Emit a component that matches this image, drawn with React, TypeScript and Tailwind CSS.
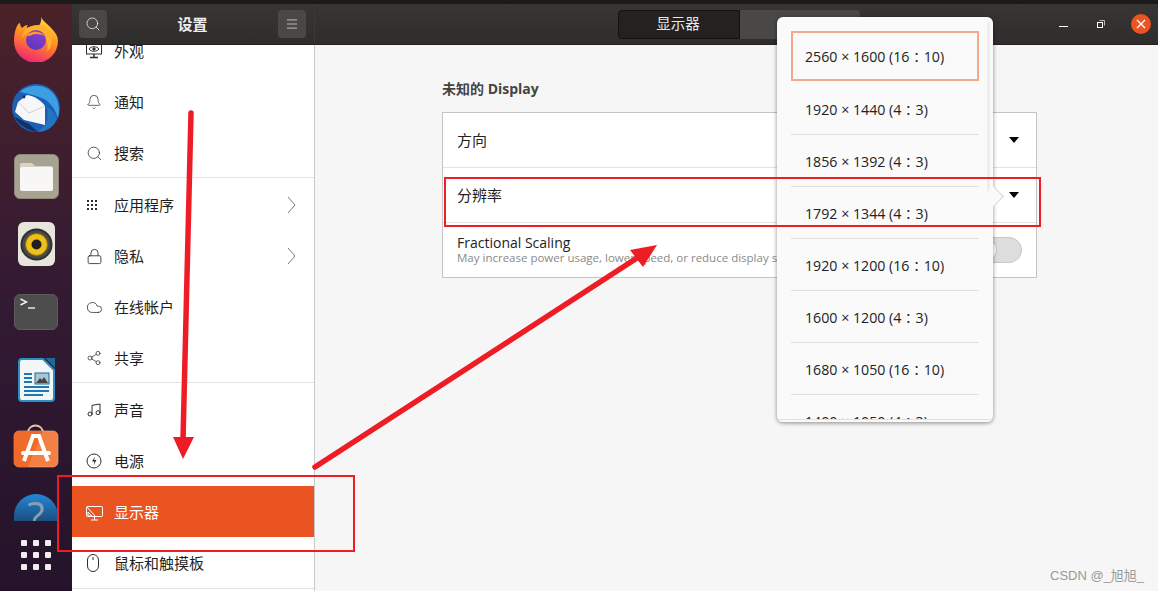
import { Bell, Cloud, Lock, Menu, Music, Search, Share2 } from "lucide-react";
import type { ReactNode } from "react";

const cjk = "font-['Open_Sans','Noto_Sans_CJK_SC',sans-serif]";

const FirefoxIcon = () => (
  <svg width="46" height="46" viewBox="0 0 46 46">
    <defs>
      <linearGradient id="ff" x1="0.7" y1="0" x2="0.35" y2="1">
        <stop offset="0" stopColor="#ffe23a" />
        <stop offset="0.5" stopColor="#ff8a22" />
        <stop offset="1" stopColor="#f0207a" />
      </linearGradient>
      <linearGradient id="ffp" x1="0.8" y1="0" x2="0.2" y2="1">
        <stop offset="0" stopColor="#8f3fd8" />
        <stop offset="1" stopColor="#5a36b8" />
      </linearGradient>
    </defs>
    <path d="M28 0c1 5 7 8 11 13 4 4 6 8 6 12a22 22 0 0 1-44 0c0-6 1-11 3-15 1-2 2-3 3-3 0 2 1 4 2 5 2-2 4-3 6-3-1 1-1 2-1 3 3-2 8-2 11-1 3-4 4-8 3-11z" fill="url(#ff)" />
    <path d="M9 22c1-8 8-13 15-13 8 0 14 6 15 14 0 6-2 10-5 13 2-9-1-18-10-20-7-1-12 2-15 6z" fill="#ffb02e" />
    <circle cx="23" cy="24" r="10" fill="url(#ffp)" />
    <path d="M13 20c3-3 7-5 11-4 3 0 6 2 8 4-4-2-10-3-13-1-2 1-4 1-6 1z" fill="#ff9a1f" />
  </svg>
);

const ThunderbirdIcon = () => (
  <svg width="48" height="48" viewBox="0 0 48 48">
    <circle cx="24" cy="24" r="24" fill="#1d5fb3" />
    <path d="M8 8C16 0 32-1 41 9c6 7 7 17 5 25-3-9-7-15-14-19-6-3-14-5-24-7z" fill="#3b9fe2" />
    <path d="M1 30c3 9 14 17 25 18l-9-8-14-7z" fill="#12306a" />
    <path d="M34 22c3 7 2 14-1 19l-7 7c9 0 16-6 19-13-2-6-6-10-11-13z" fill="#2474c4" />
    <path d="M6 18l9-7c7 1 14 5 18 11v19l-21-5-9-8z" fill="#f7f7f9" />
    <path d="M6 18l11 11 16-7" fill="none" stroke="#c4c7d0" strokeWidth="0.800" />
    <circle cx="12" cy="13" r="1.400" fill="#12305f" />
  </svg>
);

const FilesIcon = () => (
  <div className="w-[45px] h-[45px] rounded-md bg-[#a8a290] border border-[#8d8878] flex items-center justify-center">
    <svg width="33" height="29" viewBox="0 0 33 29">
      <path d="M0 3a2 2 0 0 1 2-2h10l3 3h16a2 2 0 0 1 2 2v2H0z" fill="#d6d3c9" />
      <rect x="0" y="5" width="33" height="24" rx="2" fill="#f8f7f5" />
    </svg>
  </div>
);

const RhythmboxIcon = () => (
  <div className="w-[37px] h-[44px] rounded-md bg-[#e8e5dc] flex items-center justify-center">
    <svg width="33" height="33" viewBox="0 0 33 33">
      <circle cx="16.500" cy="16.500" r="16" fill="#2e2e2e" />
      <circle cx="16.500" cy="16.500" r="14" fill="#4a4a48" />
      <circle cx="16.500" cy="16.500" r="11" fill="#f0c018" stroke="#8a701c" strokeWidth="1" />
      <circle cx="16.500" cy="16.500" r="5" fill="#1f1f1f" />
    </svg>
  </div>
);

const TerminalIcon = () => (
  <div className="w-[44px] h-[36px] rounded-md bg-[#4d4d4d] border border-[#5c5c5c] relative">
    <svg width="44" height="36" viewBox="0 0 44 36" className="absolute -left-px -top-px">
      <path d="M6.500 5l6 3-6 3" fill="none" stroke="#f2f2f2" strokeWidth="1.400" />
      <path d="M14 14h7" stroke="#f2f2f2" strokeWidth="1.400" />
    </svg>
  </div>
);

const WriterIcon = () => (
  <svg width="37" height="44" viewBox="0 0 37 44">
    <path d="M4 1h21l11 11v28a3 3 0 0 1-3 3H4a3 3 0 0 1-3-3V4a3 3 0 0 1 3-3z" fill="#f3f5f7" stroke="#2c8fc4" strokeWidth="2" />
    <path d="M27 0h10v10z" fill="#1b6a98" />
    <path d="M6 16h8M6 20h8M6 24h8M6 29h25M6 33h25M6 37h19" stroke="#1b78b0" strokeWidth="2" />
    <rect x="17" y="15" width="14" height="11" fill="#a9c6d8" stroke="#1b6a98" />
    <path d="M18 25l4-5 2 2 2-3 4 6z" fill="#444" />
  </svg>
);

const SoftwareIcon = () => (
  <svg width="46" height="44" viewBox="0 0 46 44">
    <path d="M15 9c0-10 15-10 15 0" fill="none" stroke="#e9c9a0" strokeWidth="1.800" />
    <rect x="1" y="7" width="44" height="36" rx="5" fill="#f58043" stroke="#f8a878" strokeWidth="0.600" />
    <path d="M1 12a5 5 0 0 1 5-5h24L15 43H6a5 5 0 0 1-5-5z" fill="#f06a2a" />
    <path d="M11 37l9-25h6l9 25" fill="none" stroke="#fff" strokeWidth="4" />
    <rect x="8" y="27" width="30" height="4" rx="2" fill="#fff" />
  </svg>
);

const HelpIcon = () => (
  <div className="w-[44px] h-[27px] rounded-t-full bg-gradient-to-b from-[#2488d8] to-[#1b4f80] flex justify-center overflow-hidden">
    <span className={`${cjk} text-[40px] leading-[44px] h-[27px] text-[#8b9eb0]`}>?</span>
  </div>
);

const DisplayIcon = ({ light }: { light?: boolean }) => (
  <svg width="17" height="16" viewBox="0 0 17 16" fill="none" stroke={light ? "#ffffff" : "#2e2e2e"} strokeWidth="1">
    <rect x="0.500" y="1.500" width="16" height="10" rx="1" />
    <path d="M1 2l8 9M2 7l4 4H2zM5 15h7M8.500 12v3" />
  </svg>
);

const AppearanceIcon = () => (
  <svg width="16" height="16" viewBox="0 0 16 16" fill="none" stroke="#2e2e2e" strokeWidth="1">
    <rect x="0.500" y="0.500" width="15" height="10.500" />
    <path d="M3 6c2-3 8-3 10 0-2 3-8 3-10 0z" />
    <circle cx="8" cy="6" r="1.200" fill="#2e2e2e" />
    <path d="M4 14.500h8M8 11v3" strokeWidth="1.500" />
  </svg>
);

const AppsIcon = () => (
  <div className="grid grid-cols-3 gap-[2px] w-[10px] ml-[1px]">
    {Array.from({ length: 9 }).map((_, i) => (
      <span key={i} className="w-[2px] h-[2px] bg-[#2e2e2e]" />
    ))}
  </div>
);

const PowerIcon = () => (
  <svg width="16" height="16" viewBox="0 0 16 16" fill="none" stroke="#2e2e2e">
    <circle cx="8" cy="8" r="7" />
    <path d="M9 3.500L6 8.500h2.500L7.500 12.500l3-5.500H8z" fill="#2e2e2e" stroke="none" />
  </svg>
);

const MouseIcon = () => (
  <svg width="14" height="18" viewBox="0 0 14 18" fill="none" stroke="#2e2e2e">
    <rect x="1.500" y="0.500" width="11" height="17" rx="5.500" />
    <path d="M7 3v3" />
  </svg>
);

const Chevron = () => (
  <svg width="9" height="18" viewBox="0 0 9 18" fill="none" stroke="#666" strokeWidth="0.900">
    <path d="M1 1l7 8-7 8" />
  </svg>
);

const navIcon = "text-[#2e2e2e]";

const Row = ({ icon, label, chevron, divider, active }: { icon: ReactNode; label: string; chevron?: boolean; divider?: boolean; active?: boolean }) => (
  <div className={`h-[51.300px] shrink-0 flex items-center pt-[2px] pl-[14px] pr-[18px] ${active ? "bg-[#e95420] text-white" : "text-[#1f1f1f]"} ${divider ? "border-b border-[#e2e2e2]" : ""}`}>
    <span className="w-[28px] flex items-center justify-start">{icon}</span>
    <span className={`${cjk} text-[15px] flex-1`}>{label}</span>
    {chevron && <Chevron />}
  </div>
);

const modes = [
  "2560 × 1600 (16∶10)",
  "1920 × 1440 (4∶3)",
  "1856 × 1392 (4∶3)",
  "1792 × 1344 (4∶3)",
  "1920 × 1200 (16∶10)",
  "1600 × 1200 (4∶3)",
  "1680 × 1050 (16∶10)",
  "1400 × 1050 (4∶3)",
];

const Arrow = ({ d, tip }: { d: string; tip: string }) => (
  <svg width="1158" height="591" viewBox="0 0 1158 591" className="absolute inset-0 pointer-events-none">
    <path d={d} fill="none" stroke="#ee1c25" strokeWidth="5.500" strokeLinecap="round" />
    <path d={tip} fill="#ee1c25" />
  </svg>
);

export default function App() {
  return (
    <div className={`${cjk} relative w-[1158px] h-[591px] overflow-hidden flex flex-col bg-[#f6f6f6]`}>
      <div className="h-[4px] shrink-0 bg-[#1b1b1b]" />
      <div className="flex-1 flex min-h-0">
        <aside className="w-[72px] shrink-0 bg-gradient-to-b from-[#4a2128] via-[#331a33] to-[#24132a] pt-[12px] flex flex-col items-center">
          <div className="h-[46px] flex items-center"><FirefoxIcon /></div>
          <div className="mt-[22px] h-[48px] flex items-center"><ThunderbirdIcon /></div>
          <div className="mt-[22px] h-[45px] flex items-center"><FilesIcon /></div>
          <div className="mt-[23px] h-[44px] flex items-center"><RhythmboxIcon /></div>
          <div className="mt-[28px] h-[36px] flex items-center"><TerminalIcon /></div>
          <div className="mt-[28px] h-[44px] flex items-center"><WriterIcon /></div>
          <div className="mt-[22px] h-[44px] flex items-center"><SoftwareIcon /></div>
          <div className="mt-[26px] h-[27px] flex items-center"><HelpIcon /></div>
          <div className="mt-[19px] grid grid-cols-3 gap-x-[6px] gap-y-[6px]">
            {Array.from({ length: 9 }).map((_, i) => (
              <span key={i} className="w-[6px] h-[6px] rounded-[1px] bg-[#eeeeee]" />
            ))}
          </div>
        </aside>

        <div className="flex-1 flex flex-col min-w-0">
          <header className="h-[41px] shrink-0 bg-gradient-to-b from-[#383533] to-[#2f2d2c] border-b border-[#232221] flex text-white">
            <div className="w-[243px] shrink-0 flex items-center justify-between pl-[7px] pr-[8px] border-r border-[#3b3937]">
              <button className="w-[28px] h-[28px] rounded bg-[#4a4846] flex items-center justify-center text-[#eee]"><Search size={16} strokeWidth={1.200} /></button>
              <span className="text-[15px] font-bold text-[#eeeeee]">设置</span>
              <button className="w-[28px] h-[28px] rounded bg-[#4a4846] flex items-center justify-center text-[#eee]"><Menu size={14} strokeWidth={1.200} /></button>
            </div>
            <div className="flex-1 relative flex items-center">
              <div className="ml-[303px] flex h-[29px] text-[14.500px]">
                <div className="w-[122px] flex items-center justify-center pr-[2px] bg-[#232221] border border-[#111] rounded-l text-[#e8e8e8]">显示器</div>
                <div className="w-[120px] bg-[#4a4846] rounded-r" />
              </div>
              <div className="ml-auto flex items-center pr-[7px]">
                <span className="w-[9px] h-px bg-white mr-[29px] relative top-[2px]" />
                <svg width="8" height="8" viewBox="0 0 8 8" fill="none" stroke="#fff" className="mr-[26px]">
                  <rect x="0.500" y="2.500" width="5" height="5" />
                  <path d="M2.500 0.500h5v5" stroke="#bbb" />
                </svg>
                <span className="w-[20px] h-[20px] rounded-full bg-[#e95420] flex items-center justify-center">
                  <svg width="10" height="10" viewBox="0 0 10 10"><path d="M1 1l8 8M9 1l-8 8" stroke="#fff" strokeWidth="1.300" /></svg>
                </span>
              </div>
            </div>
          </header>

          <div className="flex-1 flex min-h-0">
            <nav className="w-[243px] shrink-0 bg-white border-r border-[#c9c9c9] overflow-hidden">
              <div className="flex flex-col -mt-[20.700px]">
                <Row icon={<AppearanceIcon />} label="外观" />
                <Row icon={<Bell size={16} strokeWidth={1.100} className={navIcon} />} label="通知" />
                <Row icon={<Search size={17} strokeWidth={1.100} className={navIcon} />} label="搜索" divider />
                <Row icon={<AppsIcon />} label="应用程序" chevron />
                <Row icon={<Lock size={17} strokeWidth={1.200} className={navIcon} />} label="隐私" chevron />
                <Row icon={<Cloud size={17} strokeWidth={1.100} className={navIcon} />} label="在线帐户" />
                <Row icon={<Share2 size={16} strokeWidth={1.100} className={navIcon} />} label="共享" divider />
                <Row icon={<Music size={16} strokeWidth={1.500} className={navIcon} />} label="声音" />
                <Row icon={<PowerIcon />} label="电源" />
                <Row icon={<DisplayIcon light />} label="显示器" active />
                <Row icon={<MouseIcon />} label="鼠标和触摸板" divider />
              </div>
            </nav>

            <main className="flex-1 pl-[127px] pt-[35px]">
              <h2 className="text-[14px] font-bold text-[#444] leading-[18px]">未知的 Display</h2>
              <div className="w-[595px] mt-[14px] bg-white border border-[#c4c4c4]">
                <div className="h-[55px] flex items-center justify-between pl-[14px] pr-[17px] border-b border-[#e2e2e2] text-[15px] text-[#222]">
                  方向
                  <span className="w-0 h-0 border-x-[5px] border-x-transparent border-t-[6px] border-t-black" />
                </div>
                <div className="h-[55px] flex items-start justify-between pl-[14px] pr-[17px] pt-[17px] border-b border-[#e2e2e2] text-[15px] text-[#222]">
                  <span className="leading-[22px] -mt-[1px]">分辨率</span>
                  <span className="w-0 h-0 mt-[7px] border-x-[5px] border-x-transparent border-t-[6px] border-t-black" />
                </div>
                <div className="h-[54px] flex items-center justify-between pl-[14px] pr-[14px]">
                  <div className="pb-[2px]">
                    <p className="text-[14px] leading-[16px] text-[#222]">Fractional Scaling</p>
                    <p className="text-[11.500px] leading-[13px] text-[#8a8a8a] whitespace-nowrap">May increase power usage, lower speed, or reduce display sharpness.</p>
                  </div>
                  <span className="w-[50px] h-[26px] rounded-full bg-[#dddddd] border border-[#c6c6c6] flex">
                    <span className="w-[24px] h-[24px] rounded-full bg-white border border-[#c6c6c6]" />
                  </span>
                </div>
              </div>
            </main>
          </div>
        </div>
      </div>

      {/* resolution popover */}
      <div className="absolute left-[777px] top-[17px] w-[216px] h-[405px] bg-[#fafafa] rounded-md shadow-[0_1px_4px_rgba(0,0,0,0.45)] px-[14px] pt-[14px] overflow-hidden">
        <div className="absolute right-[3px] top-[5px] w-[3px] h-[177px] rounded bg-[#eeeeee]" />
        {modes.map((mode, i) =>
          i === 0 ? (
            <div key={mode} className="h-[50px] mb-[2px] flex items-center pt-[1px] pl-[12px] border-2 border-[#f4a88c] text-[14.200px] text-[#222] whitespace-nowrap">
              {mode}
            </div>
          ) : (
            <div key={mode} className="h-[52px] flex items-center pt-[2px] pl-[14px] border-b border-[#e0e0e0] text-[14.200px] text-[#222] whitespace-nowrap">
              {mode}
            </div>
          )
        )}
        <div className="absolute inset-x-0 bottom-0 h-[3px] bg-[#fafafa] border-t border-[#e0e0e0]" />
      </div>
      <span className="absolute left-[985.500px] top-[188.500px] w-[15px] h-[15px] bg-[#fafafa] rotate-45 border-t border-r border-[#d6d6d6]" />

      {/* annotations */}
      <div className="absolute left-[444px] top-[177px] w-[597px] h-[50px] border-2 border-[#ee1c25]" />
      <div className="absolute left-[57px] top-[475px] w-[298px] h-[77px] border-2 border-[#ee1c25]" />
      <Arrow d="M191 113L183 440" tip="M173 437L194 437L183 459z" />
      <Arrow d="M315 467L637 258" tip="M657 245L630 250L643 267z" />

      <span className="absolute left-[1050px] top-[566px] text-[13px] text-[#999] font-['Liberation_Sans','Noto_Sans_CJK_SC',sans-serif]">CSDN @_旭旭_</span>
    </div>
  );
}
